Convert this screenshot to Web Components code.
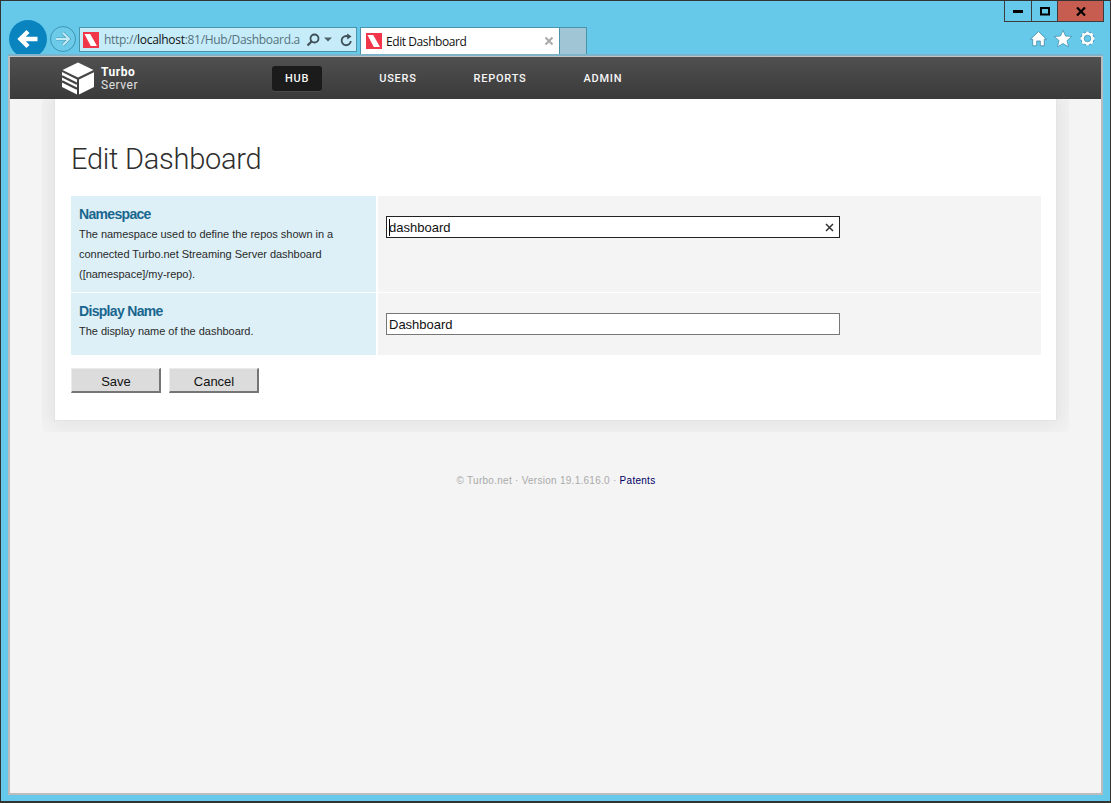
<!DOCTYPE html>
<html lang="en"><head><meta charset="utf-8"><title>Edit Dashboard</title>
<style>
html,body{margin:0;padding:0;height:803px;overflow:hidden;background:#66c9ea}
body{font-family:"Liberation Sans",Arial,sans-serif}
</style></head>
<body>
<ie-window>
  <ie-chrome></ie-chrome>
  <ts-page>
    <ts-nav></ts-nav>
    <ts-card>
      <h-title slot="title">Edit Dashboard</h-title>
      <ts-row label="Namespace" h="96">
        <span slot="desc">The namespace used to define the repos shown in a connected Turbo.net Streaming Server dashboard ([namespace]/my-repo).</span>
        <ts-input value="dashboard" focused></ts-input>
      </ts-row>
      <ts-row label="Display Name" h="62">
        <span slot="desc">The display name of the dashboard.</span>
        <ts-input value="Dashboard"></ts-input>
      </ts-row>
      <ts-actions><ts-button>Save</ts-button><ts-button>Cancel</ts-button></ts-actions>
    </ts-card>
    <ts-footer></ts-footer>
  </ts-page>
</ie-window>
<script>
const def=(name,html,init)=>customElements.define(name,class extends HTMLElement{
  connectedCallback(){ if(this.shadowRoot) return; const r=this.attachShadow({mode:'open'}); r.innerHTML=typeof html==='function'?html(this):html; init&&init(this,r);}
});
const favicon=`<svg width="16" height="16" viewBox="0 0 16 16" style="display:block;flex:none"><rect width="16" height="16" fill="#f1364a"/><path d="M1.500 2H7.200L14 14H7.800Z" fill="#fff"/></svg>`;

def('ie-window',`<style>:host{display:flex;flex-direction:column;box-sizing:border-box;height:803px;border:1px solid #333;border-width:1px 1px 2px 1px;background:#66c9ea;overflow:hidden}</style><slot></slot>`);

def('ie-chrome',`<style>
:host{display:block;height:55px;flex:none;font-family:"Open Sans","Noto Sans",sans-serif}
.cap{display:flex;justify-content:flex-end;height:21px;padding-right:6px}
.b{box-sizing:border-box;height:21px;border:1px solid #3c3c3c;border-top:0;border-left:0;display:flex;align-items:center;justify-content:center}
.min{width:28px;border-left:1px solid #3c3c3c}.max{width:26px}.cl{width:46px;background:#c75c50}
.bar{display:flex;align-items:flex-start;height:34px;padding-left:8px}
.back{margin-top:-2px;flex:none}.fwd{margin:4px 0 0 3px;flex:none}
.addr{box-sizing:border-box;margin:5px 0 0 3px;width:278px;height:25px;flex:none;background:#c5ecf8;border:1px solid #4b93ab;display:flex;align-items:center;padding-left:3px;color:#56727f}
.url{width:198px;margin-left:5px;white-space:nowrap;font-size:12px;letter-spacing:-.3px}.url b{font-weight:400;color:#111}
.ai{display:flex;align-items:center;gap:4px;margin-left:4px}
.tab{box-sizing:border-box;margin:5px 0 0 3px;width:200px;height:29px;background:#fff;border:1px solid #4b93ab;border-bottom:0;display:flex;align-items:center;padding:0 5px 2px 5px;font-size:12px;letter-spacing:-.42px;color:#111;gap:4px;flex:none}
.tab span{flex:1;white-space:nowrap}
.new{box-sizing:border-box;margin-top:5px;width:27px;height:29px;background:#a0c6d6;border:1px solid #4b93ab;border-left:0;border-bottom:0;flex:none}
.tools{margin-left:auto;display:flex;gap:7px;padding:8px 14px 0 0}
svg{display:block}
</style>
<div class="cap">
 <div class="b min"><svg width="10" height="4"><rect y="1" width="10" height="3" fill="#000"/></svg></div>
 <div class="b max"><svg width="10" height="9"><rect x="1" y="1" width="8" height="6.500" fill="none" stroke="#000" stroke-width="2"/></svg></div>
 <div class="b cl"><svg width="10" height="9" viewBox="0 0 10 9"><path d="M1 .5 9 8.500M9 .5 1 8.500" stroke="#000" stroke-width="2.200" fill="none"/></svg></div>
</div>
<div class="bar">
 <svg class="back" width="38" height="38" viewBox="0 0 38 38"><circle cx="19" cy="19" r="19" fill="#0a84bf"/><path d="M28.500 19H12M19 11.500 11.500 19 19 26.500" fill="none" stroke="#fff" stroke-width="4.400"/></svg>
 <svg class="fwd" width="26" height="26" viewBox="0 0 26 26"><circle cx="13" cy="13" r="12.500" fill="#6ccbe9" stroke="#3f93b0"/><path d="M6 13H18.500M13 7 19 13 13 19" fill="none" stroke="#4f9fba" stroke-width="3.200"/><path d="M6 13H18.500M13 7 19 13 13 19" fill="none" stroke="#c3ebf6" stroke-width="2"/></svg>
 <div class="addr">${favicon}<div class="url">http://<b>localhost</b>:81/Hub/Dashboard.a</div>
  <div class="ai">
   <svg width="14" height="14" viewBox="0 0 14 14"><circle cx="8.500" cy="5.500" r="4" fill="none" stroke="#3f4f57" stroke-width="1.800"/><path d="M5.500 8.500 1.500 12.500" stroke="#3f4f57" stroke-width="2.200"/></svg>
   <svg width="8" height="5"><path d="M0 .5H8L4 4.500Z" fill="#50636c"/></svg>
   <svg style="margin-left:4px" width="13" height="14" viewBox="0 0 13 14"><path d="M10.800 8A4.600 4.600 0 1 1 8 3.400" fill="none" stroke="#3f4f57" stroke-width="1.800"/><path d="M7.200 .5V6.500L11.500 3.500Z" fill="#3f4f57"/></svg>
  </div></div>
 <div class="tab">${favicon}<span>Edit Dashboard</span><svg width="10" height="10" viewBox="0 0 10 10"><path d="M1.500 1.500 8.500 8.500M8.500 1.500 1.500 8.500" stroke="#a9a9a9" stroke-width="2"/></svg></div>
 <div class="new"></div>
 <div class="tools">
  <svg width="17" height="17" viewBox="0 0 17 17"><path d="M8.500 1.500 16.500 9.200H14.300V15.800H10.300V11H6.700V15.800H2.700V9.200H.5Z" fill="#fff" stroke="#3d88a8" stroke-width=".8" stroke-linejoin="round"/></svg>
  <svg width="18" height="17" viewBox="0 0 18 17"><path d="M9 .3 11.500 6 17.800 6.500 13 10.600 14.500 16.800 9 13.500 3.500 16.800 5 10.600 .2 6.500 6.500 6Z" fill="#fff" stroke="#3d88a8" stroke-width=".7"/></svg>
  <svg width="17" height="17" viewBox="0 0 17 17"><path d="M8.500 1.500V15.500M1.500 8.500H15.500M3.500 3.500 13.500 13.500M13.500 3.500 3.500 13.500" stroke="#3d88a8" stroke-width="4"/><path d="M8.500 1.500V15.500M1.500 8.500H15.500M3.500 3.500 13.500 13.500M13.500 3.500 3.500 13.500" stroke="#fff" stroke-width="2.600"/><circle cx="8.500" cy="8.500" r="4.800" fill="none" stroke="#fff" stroke-width="2.400"/><circle cx="8.500" cy="8.500" r="3.300" fill="#66c9ea" stroke="#3d88a8" stroke-width=".7"/></svg>
 </div>
</div>`);

def('ts-page',`<style>:host{display:block;position:relative;box-sizing:border-box;margin:0 7px 0 7px;height:739px;flex:none;background:#f4f4f4;border:2px solid #bcbcbc;border-top:1px solid #c4c4c4;box-shadow:0 -2px 0 #7fb3c9}</style><slot></slot>`);

def('ts-nav',`<style>
:host{display:flex;align-items:center;box-sizing:border-box;height:42px;padding-left:52px;background:linear-gradient(#505050,#3a3a3a);color:#fff;font-family:Roboto,"Liberation Sans",sans-serif}
.logo{display:flex;align-items:center;gap:7px;width:210px;flex:none}
.lt{font-size:12px;line-height:13px;letter-spacing:.55px;padding-top:1px}.lt b{display:block;font-weight:700}.lt span{display:block;color:#e0e0e0}
nav{display:flex;gap:57px;font-size:11px;font-weight:500;letter-spacing:.75px;color:#f6f6f6}
.hub{background:#1b1b1b;border-radius:3px;height:25px;line-height:25px;padding:0 13px;box-shadow:0 1px 0 #4c4c4c}
nav span{line-height:25px}
</style>
<div class="logo">
<svg width="32" height="33" viewBox="0 0 32 33"><path d="M16 .5 31.500 8 16 15.500 .5 8Z" fill="#fff"/><path d="M17 17.500 32 10.200V25L17 32.500Z" fill="#fff"/><path d="M0 10 15 17.500V32.500L0 25Z" fill="#fff"/><path d="M0 14.300 15 21.800M0 19.300 15 26.800" stroke="#414141" stroke-width="2.200"/></svg>
<div class="lt"><b>Turbo</b><span>Server</span></div>
</div>
<nav><span class="hub">HUB</span><span>USERS</span><span>REPORTS</span><span>ADMIN</span></nav>`);

def('ts-card',`<style>
:host{display:block;box-sizing:border-box;width:1001px;height:321px;margin:0 auto;padding:0 15px 0 16px;background:#fff;box-shadow:0 0 0 1px #e4e4e4,0 0 22px 8px rgba(0,0,0,.065);clip-path:inset(0 -13px -12px -13px)}
h1{margin:0;height:97px;box-sizing:border-box;padding-top:40px;font:300 29px/40px Roboto,"Open Sans",sans-serif;color:#2e2e2e;white-space:nowrap;letter-spacing:-.25px}
</style><h1><slot name="title"></slot></h1><slot></slot>`);
def('h-title',`<style>:host{display:inline}</style><slot></slot>`);

customElements.define('ts-row',class extends HTMLElement{connectedCallback(){if(this.shadowRoot)return;const r=this.attachShadow({mode:'open'});
const h=this.getAttribute('h');r.innerHTML=`<style>
:host{display:grid;grid-template-columns:305px 663px;column-gap:2px;height:${h}px;margin-bottom:1px;font-family:"Liberation Sans",Arial,sans-serif}
.l{background:#ddf0f8;padding:9px 14px 0 8px;box-sizing:border-box}
h2{margin:0;font-size:14px;line-height:18px;font-weight:700;color:#19668e;letter-spacing:-.68px}
.d{display:block;font-size:11px;line-height:20px;color:#2a2a2a;padding-top:1px;letter-spacing:-.03px}
.r{background:#f4f4f4;padding:20px 8px 0;box-sizing:border-box}
</style><div class="l"><h2>${this.getAttribute('label')}</h2><div class="d"><slot name="desc"></slot></div></div><div class="r"><slot></slot></div>`}});

customElements.define('ts-input',class extends HTMLElement{connectedCallback(){if(this.shadowRoot)return;const r=this.attachShadow({mode:'open'});
const f=this.hasAttribute('focused');r.innerHTML=`<style>
:host{display:flex;align-items:center;box-sizing:border-box;width:454px;height:22px;background:#fff;border:1px solid ${f?'#222':'#777'};padding:0 5px 0 2px;font:13px "Liberation Sans",Arial,sans-serif;color:#111;position:relative}
.t{flex:1}
.c{position:absolute;left:2px;top:2px;width:1px;height:17px;background:#000}
svg{display:block;margin-right:0}
</style><span class="t">${this.getAttribute('value')}</span>${f?'<i class="c"></i><svg width="9" height="9" viewBox="0 0 9 9"><path d="M1 1 8 8M8 1 1 8" stroke="#333" stroke-width="1.500"/></svg>':''}`}});

def('ts-actions',`<style>:host{display:flex;gap:8px;padding-top:12px}</style><slot></slot>`);
def('ts-button',`<style>:host{display:flex;align-items:center;justify-content:center;box-sizing:border-box;width:90px;height:25px;padding:2px 0 0 1px;background:#dcdcdc;border:1px solid #ececec;border-right:2px solid #757575;border-bottom:2px solid #757575;font:13px "Liberation Sans",Arial,sans-serif;color:#111}</style><slot></slot>`);
def('ts-footer',`<style>:host{display:block;margin-top:54px;text-align:center;font:10px/14px "Liberation Sans",Arial,sans-serif;color:#aaa;letter-spacing:.27px;padding-left:1px}a{color:#006;text-decoration:none}</style>© Turbo.net · Version 19.1.616.0 · <a>Patents</a>`);
</script>
</body></html>
